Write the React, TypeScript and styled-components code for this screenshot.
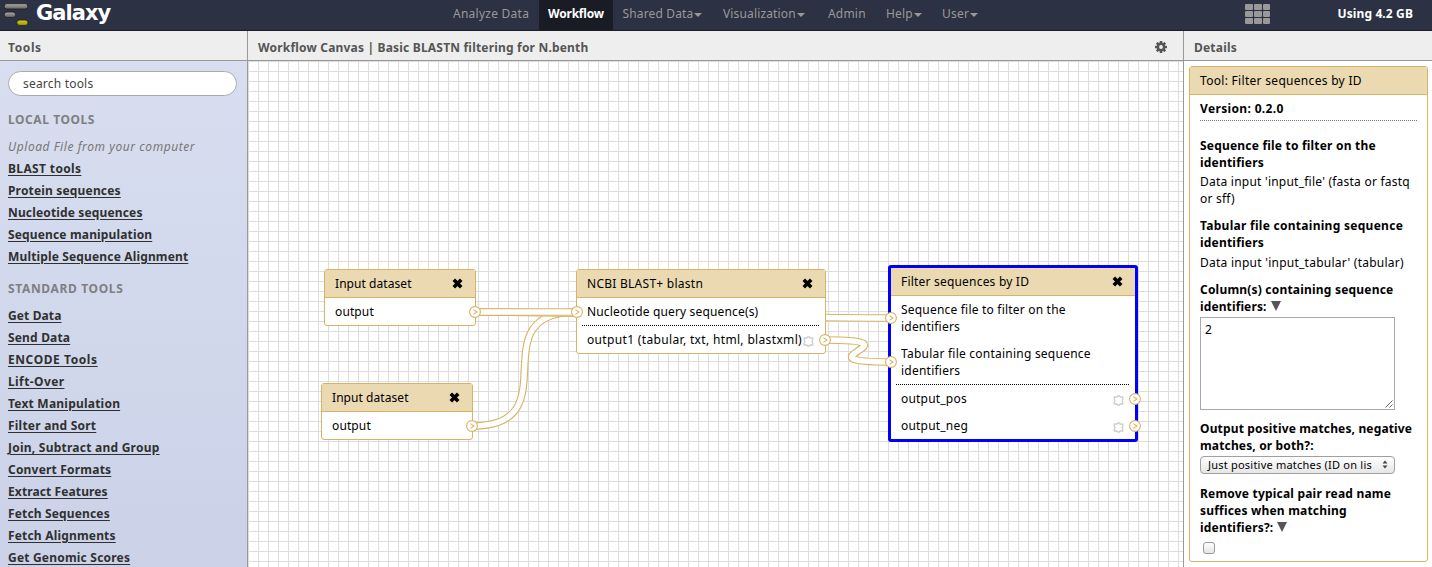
import React from "react";
import styled, { createGlobalStyle, css } from "styled-components";

const GOLD = "#d8b365";
const SAND = "#ebd9b2";

const GlobalStyle = createGlobalStyle`
  html, body { margin: 0; padding: 0; overflow: hidden; }
  * { box-sizing: border-box; }
  body {
    font-family: "Noto Sans", "Open Sans", sans-serif;
    font-size: 12px;
    line-height: 17px;
    color: #000;
  }
`;

const Page = styled.div`
  display: flex;
  flex-direction: column;
  width: 1432px;
  height: 567px;
  overflow: hidden;
  background: #fff;
`;

const T = styled.span<{ $ls?: number }>`
  letter-spacing: ${(p) => p.$ls ?? 0.2}px;
  white-space: nowrap;
`;

/* Masthead */
const Masthead = styled.header`
  display: grid;
  grid-template-columns: 439px 1fr 31px 156px;
  flex: none;
  height: 31px;
  background: #2c3143;
  border-bottom: 1px solid #1a1c27;
`;
const Brand = styled.div`
  display: flex;
  align-items: flex-start;
  gap: 7px;
  padding-left: 4px;
  color: #fff;
`;
const BrandName = styled.span`
  font: bold 21px/27px "DejaVu Sans", sans-serif;
  letter-spacing: -0.95px;
`;
const Nav = styled.nav`
  display: flex;
`;
const NavItem = styled.a<{ $active?: boolean; $w: number; $pad?: number }>`
  display: flex;
  align-items: center;
  width: ${(p) => p.$w}px;
  height: 30px;
  padding: 0 0 3px ${(p) => p.$pad ?? 10}px;
  color: #999;
  ${(p) =>
    p.$active &&
    css`
      background: #1a1c25;
      color: #fff;
      font-weight: bold;
    `}
`;
const Caret = styled.i`
  margin: 3px 0 0 1px;
  border: 4px solid transparent;
  border-top-color: #999;
  border-bottom: 0;
`;
const Apps = styled.div`
  display: grid;
  grid-template-columns: 8px 8px 7px;
  grid-template-rows: repeat(3, 6px);
  gap: 1px;
  padding-top: 4px;
`;
const AppDot = styled.i`
  background: #999;
  border-radius: 1px;
`;
const Quota = styled.div`
  padding: 5px 19px 0 0;
  text-align: right;
  color: #fff;
  font-weight: bold;
`;

/* Three columns */
const Columns = styled.div`
  display: grid;
  grid-template-columns: 247px 937px 248px;
  flex: 1;
  min-height: 0;
`;
const Column = styled.section<{ $side?: "left" | "center" }>`
  display: flex;
  flex-direction: column;
  min-width: 0;
  min-height: 0;
  background: ${(p) => (p.$side === "left" ? "linear-gradient(#d9dff0, #cbd2e8)" : "#fff")};
  ${(p) =>
    p.$side === "center" &&
    css`
      border-left: 1px solid #999;
      border-right: 1px solid #999;
    `}
`;
const PanelHead = styled.div<{ $pad: number }>`
  display: flex;
  flex: none;
  justify-content: space-between;
  align-items: center;
  height: 30px;
  padding: 3px 16px 0 ${(p) => p.$pad}px;
  background: #eee;
  border-bottom: 1px solid #999;
  color: #555;
  font-weight: bold;
`;

/* Tool list */
const ToolList = styled.div`
  display: flex;
  flex-direction: column;
  padding: 10px 10px 0 8px;
`;
const Search = styled.div`
  height: 25px;
  width: 229px;
  padding: 3px 14px;
  border: 1px solid #aaa;
  border-radius: 13px;
  background: #fff;
  color: #444;
`;
const Section = styled.div<{ $top: number }>`
  margin: ${(p) => p.$top}px 0 10px;
  color: #7e7f83;
  font-weight: bold;
`;
const Upload = styled.div`
  height: 22px;
  color: #777;
  font-style: italic;
`;
const ToolLink = styled.a`
  flex: none;
  height: 22px;
  color: #303030;
  font-weight: bold;
  text-decoration: underline;
  text-underline-offset: 2px;
`;

/* Canvas */
const Canvas = styled.div`
  position: relative;
  flex: 1;
  overflow: hidden;
  background-color: #fff;
  background-image: linear-gradient(#ddd 1px, transparent 1px),
    linear-gradient(90deg, #ddd 1px, transparent 1px);
  background-size: 10px 10px;
`;
const Wires = styled.svg`
  position: absolute;
  inset: 0;
`;
const NodeBox = styled.article<{ $x: number; $y: number; $w: number; $selected?: boolean }>`
  position: absolute;
  left: ${(p) => p.$x}px;
  top: ${(p) => p.$y}px;
  width: ${(p) => p.$w}px;
  border: ${(p) => (p.$selected ? "3px solid #0000ff" : `1px solid ${GOLD}`)};
  border-radius: 3px;
  background: #fff;
`;
const NodeHead = styled.div`
  display: flex;
  justify-content: space-between;
  align-items: center;
  height: 28px;
  padding: 0 12px 0 10px;
  background: ${SAND};
  border-bottom: 1px solid ${GOLD};
`;
const NodeBody = styled.div`
  padding: 5px;
`;
const NodeRow = styled.div<{ $gap?: boolean }>`
  display: flex;
  position: relative;
  justify-content: space-between;
  padding: 0 5px;
  margin-top: ${(p) => (p.$gap ? 10 : 0)}px;
`;
const Rule = styled.div`
  height: 1px;
  margin: 5px 0;
  background: repeating-linear-gradient(90deg, #000 0 1px, transparent 1px 2px);
`;
const TerminalDot = styled.svg<{ $side: "in" | "out"; $tall?: boolean }>`
  position: absolute;
  top: 50%;
  margin-top: ${(p) => (p.$tall ? -6 : -5.5)}px;
  ${(p) => (p.$side === "in" ? "left" : "right")}: -11px;
`;
const OutputMark = styled.svg`
  position: absolute;
  top: 5px;
  right: 6px;
`;

/* Details */
const Card = styled.div`
  width: 239px;
  height: 496px;
  margin: 5px 0 0 5px;
  border: 1px solid ${GOLD};
  border-radius: 3px;
`;
const CardHead = styled.div`
  height: 28px;
  padding: 5px 10px;
  background: ${SAND};
  border-bottom: 1px solid ${GOLD};
`;
const CardBody = styled.div`
  display: flex;
  flex-direction: column;
  padding: 5px 10px;
`;
const Field = styled.div<{ $top: number }>`
  display: flex;
  flex-direction: column;
  margin-top: ${(p) => p.$top}px;
`;
const Label = styled.div`
  display: flex;
  flex-direction: column;
  font-weight: bold;
`;
const LabelLine = styled.div`
  display: flex;
  align-items: center;
  gap: 4px;
`;
const Plain = styled.div<{ $top: number }>`
  display: flex;
  flex-direction: column;
  margin-top: ${(p) => p.$top}px;
`;
const Dots = styled.div`
  height: 1px;
  margin-top: 3px;
  background: repeating-linear-gradient(90deg, #777 0 1px, transparent 1px 2px);
`;
const Down = styled.i`
  margin-bottom: 1px;
  border: 5.5px solid transparent;
  border-top: 10px solid #555;
  border-bottom: 0;
`;
const TextBox = styled.div`
  display: flex;
  justify-content: space-between;
  width: 195px;
  height: 93px;
  margin-top: 2px;
  padding: 3px 1px 1px 4px;
  border: 1px solid #a9a9a9;
`;
const Grip = styled.svg`
  align-self: flex-end;
`;
const SelectBox = styled.div`
  display: flex;
  justify-content: space-between;
  align-items: center;
  width: 195px;
  height: 18px;
  margin-top: 2px;
  padding: 0 6px 1px 7px;
  border: 1px solid #a0a0a0;
  border-radius: 4px;
  background: linear-gradient(#fff, #e6e6e6);
  font-size: 11px;
`;
const Check = styled.div`
  width: 12px;
  height: 12px;
  margin: 6px 0 0 3px;
  border: 1px solid #999;
  border-radius: 3px;
  background: linear-gradient(#fff, #e4e4e4);
`;

const Logo = () => (
  <svg width="25" height="27" viewBox="0 0 25 27">
    <defs>
      <linearGradient id="bar" x1="0" y1="0" x2="0" y2="1">
        <stop offset="0" stopColor="#a8a8a8" />
        <stop offset="1" stopColor="#666" />
      </linearGradient>
      <linearGradient id="gold" x1="0" y1="0" x2="0" y2="1">
        <stop offset="0" stopColor="#d0ca20" />
        <stop offset="1" stopColor="#a39b00" />
      </linearGradient>
    </defs>
    <g stroke="#1c1c20" strokeWidth="0.8">
      <rect x="0.2" y="3.6" width="23.6" height="5.4" rx="2.7" fill="url(#bar)" />
      <rect x="0.2" y="12" width="11.4" height="5.4" rx="2.7" fill="url(#bar)" />
      <rect x="12.8" y="20" width="11.2" height="5.4" rx="2.7" fill="url(#gold)" />
    </g>
  </svg>
);

const Gear = () => (
  <svg width="12" height="12" viewBox="0 0 12 12">
    <g fill="#555">
      {[0, 45, 90, 135].map((a) => (
        <rect key={a} x="4.7" y="0" width="2.6" height="12" rx="0.5" transform={`rotate(${a} 6 6)`} />
      ))}
      <circle cx="6" cy="6" r="4.4" />
    </g>
    <circle cx="6" cy="6" r="1.9" fill="#eee" />
  </svg>
);

const Cross = () => (
  <svg width="11" height="11" viewBox="0 0 11 11">
    <path d="M1.8 1.8 L9.2 9.2 M9.2 1.8 L1.8 9.2" stroke="#000" strokeWidth="3.6" />
  </svg>
);

const Terminal = ({ side, tall }: { side: "in" | "out"; tall?: boolean }) => (
  <TerminalDot $side={side} $tall={tall} width="12" height="12" viewBox="0 0 12 12">
    <circle cx="6" cy="6" r="5.4" fill="#fff" stroke={GOLD} strokeWidth="1.1" />
    <path d="M4.4 3.6 L7.9 6 L4.4 8.4" fill="none" stroke={GOLD} strokeWidth="1.1" />
  </TerminalDot>
);

const Mark = () => (
  <OutputMark width="11" height="11" viewBox="0 0 11 11">
    <path
      d="M1.2 2 L3.8 2.2 L4.5 1 H6.5 L7.2 2.2 L9.8 2 V4 L9 5.5 L9.8 7 V9 L7.2 8.8 L6.5 10 H4.5 L3.8 8.8 L1.2 9 V7 L2 5.5 L1.2 4 Z"
      fill="#fff"
      stroke="#ccc"
      strokeWidth="1.3"
      strokeLinejoin="round"
    />
  </OutputMark>
);

const wire = (x1: number, y1: number, x2: number, y2: number) =>
  `M${x1} ${y1} C${x1 + 100} ${y1} ${x2 - 100} ${y2} ${x2} ${y2}`;

const wires = [
  wire(224, 365, 329, 251),
  wire(227, 251, 643, 257),
  wire(227, 251, 329, 251),
  wire(577, 279, 643, 301),
];

const nav: { label: string; w: number; caret?: boolean; active?: boolean; ls?: number; pad?: number }[] = [
  { label: "Analyze Data", w: 100, pad: 14, ls: 0.25 },
  { label: "Workflow", w: 74, active: true, ls: -0.2, pad: 9 },
  { label: "Shared Data", w: 100, caret: true, pad: 9.5, ls: 0.15 },
  { label: "Visualization", w: 105, caret: true, ls: 0.15 },
  { label: "Admin", w: 58 },
  { label: "Help", w: 56, caret: true },
  { label: "User", w: 56, caret: true },
];

const local: [string, number][] = [
  ["BLAST tools", 0.36],
  ["Protein sequences", 0.17],
  ["Nucleotide sequences", 0.15],
  ["Sequence manipulation", 0.15],
  ["Multiple Sequence Alignment", 0.15],
];
const standard: [string, number][] = [
  ["Get Data", 0.12],
  ["Send Data", 0.17],
  ["ENCODE Tools", 0.57],
  ["Lift-Over", 0.4],
  ["Text Manipulation", 0.22],
  ["Filter and Sort", 0.22],
  ["Join, Subtract and Group", 0.24],
  ["Convert Formats", 0.2],
  ["Extract Features", 0.11],
  ["Fetch Sequences", 0.15],
  ["Fetch Alignments", 0.18],
  ["Get Genomic Scores", 0.2],
];

const InputNode = ({ x, y }: { x: number; y: number }) => (
  <NodeBox $x={x} $y={y} $w={152}>
    <NodeHead>
      <T $ls={0.06}>Input dataset</T>
      <Cross />
    </NodeHead>
    <NodeBody>
      <NodeRow>
        <T $ls={0.12}>output</T>
        <Terminal side="out" />
      </NodeRow>
    </NodeBody>
  </NodeBox>
);

export default function App() {
  return (
    <Page>
      <GlobalStyle />
      <Masthead>
        <Brand>
          <Logo />
          <BrandName>Galaxy</BrandName>
        </Brand>
        <Nav>
          {nav.map((n) => (
            <NavItem key={n.label} $w={n.w} $active={n.active} $pad={n.pad}>
              <T $ls={n.ls}>{n.label}</T>
              {n.caret && <Caret />}
            </NavItem>
          ))}
        </Nav>
        <Apps>
          {Array.from({ length: 9 }, (_, i) => (
            <AppDot key={i} />
          ))}
        </Apps>
        <Quota>
          <T $ls={0.12}>Using 4.2 GB</T>
        </Quota>
      </Masthead>
      <Columns>
        <Column $side="left">
          <PanelHead $pad={8}>
            <T $ls={0.6}>Tools</T>
          </PanelHead>
          <ToolList>
            <Search>
              <T $ls={0.2}>search tools</T>
            </Search>
            <Section $top={15}>
              <T $ls={0.57}>LOCAL TOOLS</T>
            </Section>
            <Upload>
              <T $ls={0.57}>Upload File from your computer</T>
            </Upload>
            {local.map(([t, ls]) => (
              <ToolLink key={t}>
                <T $ls={ls}>{t}</T>
              </ToolLink>
            ))}
            <Section $top={10}>
              <T $ls={0.65}>STANDARD TOOLS</T>
            </Section>
            {standard.map(([t, ls]) => (
              <ToolLink key={t}>
                <T $ls={ls}>{t}</T>
              </ToolLink>
            ))}
          </ToolList>
        </Column>
        <Column $side="center">
          <PanelHead $pad={10}>
            <T $ls={0.19}>Workflow Canvas | Basic BLASTN filtering for N.benth</T>
            <Gear />
          </PanelHead>
          <Canvas>
            <Wires width="935" height="506" fill="none">
              {wires.map((d) => (
                <g key={d}>
                  <path d={d} stroke={GOLD} strokeWidth="7.6" />
                  <path d={d} stroke="#fff" strokeWidth="5.4" />
                </g>
              ))}
            </Wires>
            <InputNode x={76} y={208} />
            <InputNode x={73} y={322} />
            <NodeBox $x={328} $y={208} $w={250}>
              <NodeHead>
                <T $ls={0.26}>NCBI BLAST+ blastn</T>
                <Cross />
              </NodeHead>
              <NodeBody>
                <NodeRow>
                  <Terminal side="in" />
                  <T $ls={0.16}>Nucleotide query sequence(s)</T>
                </NodeRow>
                <Rule />
                <NodeRow>
                  <T $ls={0.34}>output1 (tabular, txt, html, blastxml)</T>
                  <Mark />
                  <Terminal side="out" />
                </NodeRow>
              </NodeBody>
            </NodeBox>
            <NodeBox $x={640} $y={204} $w={250} $selected>
              <NodeHead>
                <T>Filter sequences by ID</T>
                <Cross />
              </NodeHead>
              <NodeBody>
                <NodeRow>
                  <Terminal side="in" tall />
                  <T>
                    Sequence file to filter on the
                    <br />
                    identifiers
                  </T>
                </NodeRow>
                <NodeRow $gap>
                  <Terminal side="in" tall />
                  <T $ls={0.23}>
                    Tabular file containing sequence
                    <br />
                    identifiers
                  </T>
                </NodeRow>
                <Rule />
                <NodeRow>
                  <T>output_pos</T>
                  <Mark />
                  <Terminal side="out" />
                </NodeRow>
                <NodeRow $gap>
                  <T>output_neg</T>
                  <Mark />
                  <Terminal side="out" />
                </NodeRow>
              </NodeBody>
            </NodeBox>
          </Canvas>
        </Column>
        <Column>
          <PanelHead $pad={10}>
            <T>Details</T>
          </PanelHead>
          <Card>
            <CardHead>
              <T $ls={0.3}>Tool: Filter sequences by ID</T>
            </CardHead>
            <CardBody>
              <Label>
                <T $ls={0.35}>Version: 0.2.0</T>
              </Label>
              <Dots />
              <Field $top={16}>
                <Label>
                  <T>Sequence file to filter on the</T>
                  <T>identifiers</T>
                </Label>
                <Plain $top={2}>
                  <T $ls={0.23}>Data input 'input_file' (fasta or fastq</T>
                  <T>or sff)</T>
                </Plain>
              </Field>
              <Field $top={10}>
                <Label>
                  <T $ls={0.28}>Tabular file containing sequence</T>
                  <T>identifiers</T>
                </Label>
                <Plain $top={3}>
                  <T $ls={0.25}>Data input 'input_tabular' (tabular)</T>
                </Plain>
              </Field>
              <Field $top={10}>
                <Label>
                  <T>Column(s) containing sequence</T>
                  <LabelLine>
                    <T $ls={0.12}>identifiers:</T>
                    <Down />
                  </LabelLine>
                </Label>
                <TextBox>
                  <T>2</T>
                  <Grip width="8" height="8" viewBox="0 0 8 8">
                    <path d="M0.5 7.5 L7.5 0.5 M4.5 7.5 L7.5 4.5" stroke="#555" strokeWidth="0.9" />
                  </Grip>
                </TextBox>
              </Field>
              <Field $top={10}>
                <Label>
                  <T $ls={0.15}>Output positive matches, negative</T>
                  <T $ls={0.15}>matches, or both?:</T>
                </Label>
                <SelectBox>
                  <T $ls={0.22}>Just positive matches (ID on lis</T>
                  <svg width="6" height="9" viewBox="0 0 6 9">
                    <path d="M0.5 3.5 L3 0.5 L5.5 3.5 Z M0.5 5.5 L3 8.5 L5.5 5.5 Z" fill="#444" />
                  </svg>
                </SelectBox>
              </Field>
              <Field $top={11}>
                <Label>
                  <T>Remove typical pair read name</T>
                  <T>suffices when matching</T>
                  <LabelLine>
                    <T>identifiers?:</T>
                    <Down />
                  </LabelLine>
                </Label>
                <Check />
              </Field>
            </CardBody>
          </Card>
        </Column>
      </Columns>
    </Page>
  );
}
